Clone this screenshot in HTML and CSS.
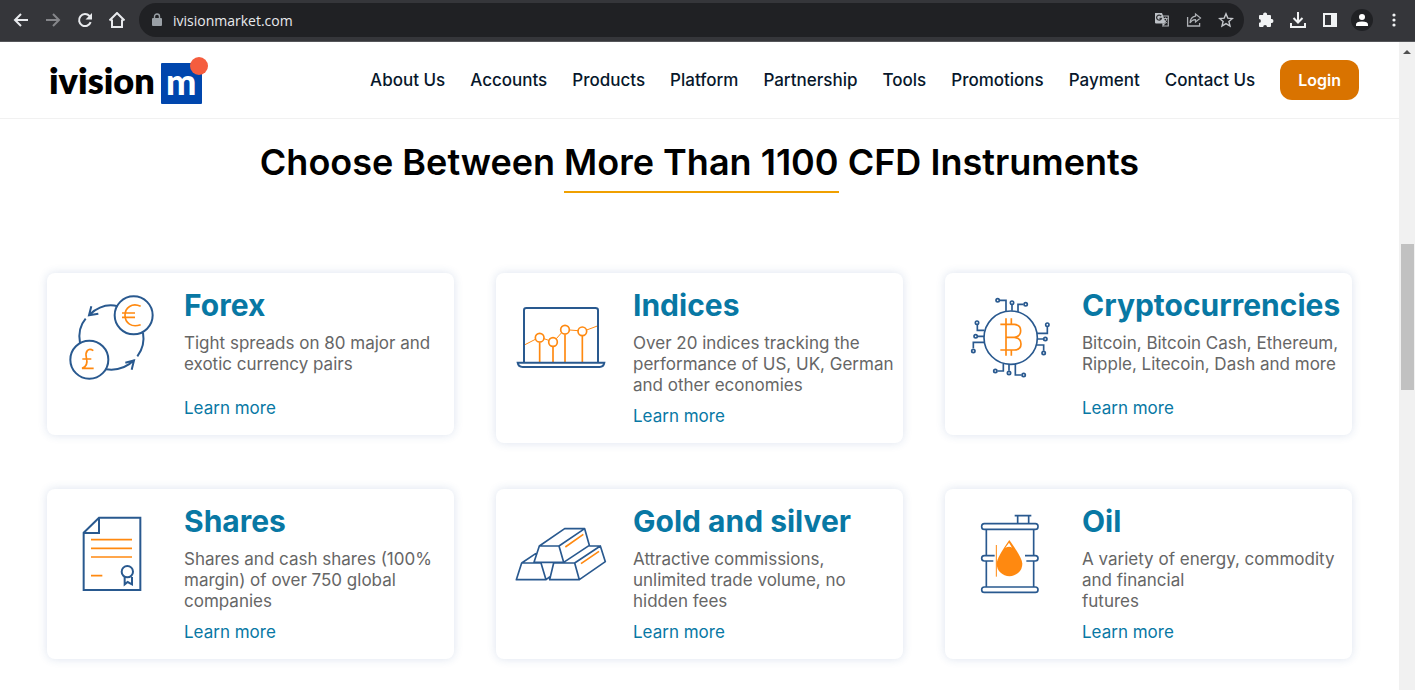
FILE: index.html
```html
<!DOCTYPE html>
<html lang="en">
<head>
<meta charset="utf-8">
<title>ivisionmarket</title>
<link rel="stylesheet" href="styles.css">
</head>
<body>
<div class="toolbar">
  <button class="tool" aria-label="Back"><svg width="16" height="16" viewBox="0 0 16 16"><path d="M15 8H2M8 2L2 8l6 6" fill="none" stroke="#e8eaed" stroke-width="2"/></svg></button>
  <button class="tool" aria-label="Forward"><svg width="16" height="16" viewBox="0 0 16 16"><path d="M1 8h13M8 2l6 6-6 6" fill="none" stroke="#85868a" stroke-width="2"/></svg></button>
  <button class="tool" aria-label="Reload"><svg width="16" height="16" viewBox="0 0 16 16"><path d="M13.7 10.200A6 6 0 1 1 12.500 4L14 5.500" fill="none" stroke="#e8eaed" stroke-width="2"/><path d="M15 1v6.500H8.500z" fill="#e8eaed"/></svg></button>
  <button class="tool" aria-label="Home"><svg width="16" height="16" viewBox="1 1 16 16"><path d="M1.500 9.500L9 2l7.500 7.500M4 8.500V16h10V8.500" fill="none" stroke="#e8eaed" stroke-width="2"/></svg></button>
  <div class="omnibox">
    <svg width="10" height="14" viewBox="0 0 10 14"><path d="M1 5h8q1 0 1 1v6q0 1-1 1H1q-1 0-1-1V6q0-1 1-1z" fill="#9aa0a6"/><path d="M2.500 6V3.500a2.500 2.500 0 0 1 5 0V6" fill="none" stroke="#9aa0a6" stroke-width="1.400"/></svg>
    <input class="address" type="text" value="ivisionmarket.com" aria-label="Address">
    <button class="tool" aria-label="Translate"><svg width="16" height="16" viewBox="0 0 16 16"><path d="M8 4h6.300v10H8" fill="none" stroke="#aeb1b5" stroke-width="1.200"/><path d="M1 1h7l4 10.500H2q-1 0-1-1z" fill="#bdc1c6"/><path d="M7.200 4.200A2.500 2.500 0 1 0 7.500 6.300H5.500" fill="none" stroke="#303134" stroke-width="1.300"/><path d="M9.500 6.500h4M11.500 5.500v1M13 6.500q-.7 3-3 4.500M10.500 8q1 2 2.500 3.200" fill="none" stroke="#aeb1b5"/><path d="M8 11.500h3.500L9 14z" fill="#bdc1c6"/></svg></button>
    <button class="tool" aria-label="Share"><svg width="16" height="16" viewBox="0 0 16 16"><path d="M1.600 5v9h12v-3" fill="none" stroke="#aeb1b5" stroke-width="1.300"/><path d="M9.500 2l5 4-5 4V7.700Q6 7.500 4 11q.4-6 5.500-6.800z" fill="none" stroke="#aeb1b5" stroke-width="1.200"/></svg></button>
    <button class="tool" aria-label="Bookmark"><svg width="16" height="16" viewBox="0 0 16 16"><path d="M8 1.800l1.800 4.300 4.600.4-3.500 3 1.100 4.600-4-2.500-4 2.500 1.100-4.600-3.500-3 4.600-.4z" fill="none" stroke="#c4c7cb" stroke-width="1.400"/></svg></button>
  </div>
  <div class="extras">
    <button class="tool" aria-label="Extensions"><svg width="16" height="16" viewBox="0 0 16 16"><path d="M1 4q0-1 1-1h3.200a2 2 0 1 1 3.800 0h3q1 0 1 1v3a2 2 0 1 1 0 3.900V14q0 1-1 1H9a1.800 1.800 0 1 0-3.800 0H2q-1 0-1-1v-3.200a1.900 1.900 0 1 0 0-3.800z" fill="#f1f3f4"/></svg></button>
    <button class="tool" aria-label="Downloads"><svg width="16" height="16" viewBox="0 0 16 16"><path d="M8 0v10M3.500 6L8 10.500 12.500 6M1 11v4h14v-4" fill="none" stroke="#f1f3f4" stroke-width="2"/></svg></button>
    <button class="tool" aria-label="Side panel"><svg width="16" height="16" viewBox="0 0 16 16"><path d="M1 1h14v14H1zM3 3v10h6V3z" fill="#f1f3f4" fill-rule="evenodd"/></svg></button>
    <button class="tool profile" aria-label="Profile"><svg width="22" height="22" viewBox="0 0 22 22"><circle cx="11" cy="11" r="11" fill="#202124"/><circle cx="11" cy="8" r="3" fill="#fff"/><path d="M5 17v-1.500Q5 12.500 11 12.500t6 3V17z" fill="#fff"/></svg></button>
    <button class="tool" aria-label="Menu"><svg width="16" height="16" viewBox="0 0 16 16"><g fill="#f1f3f4"><circle cx="8" cy="3" r="1.600"/><circle cx="8" cy="8" r="1.600"/><circle cx="8" cy="13" r="1.600"/></g></svg></button>
  </div>
</div>
<div class="viewport">
  <div class="page">
    <header class="header">
      <a class="logo" href="#"><span class="logo-word">ivision</span><span class="logo-mark">m</span></a>
      <nav class="nav">
        <a href="#">About Us</a><a href="#">Accounts</a><a href="#">Products</a><a href="#">Platform</a><a href="#">Partnership</a><a href="#">Tools</a><a href="#">Promotions</a><a href="#">Payment</a><a href="#">Contact Us</a>
        <button class="login">Login</button>
      </nav>
    </header>
    <main class="main">
      <h1 class="heading">Choose Between <span class="underlined">More Than 1100</span> CFD Instruments</h1>
      <div class="cards">
        <article class="card">
          <svg class="icon" viewBox="60 60 330 330"><g class="blue"><path d="M233 124Q190 112 148 149M154 124l-7 27 28-5M137 161Q112 190 120 234M309 203Q316 243 292 274M198 313Q247 320 282 286M256 293l26-7-7 28"/><circle cx="281" cy="151" r="57"/><circle cx="148" cy="284" r="57"/></g><g class="orange"><path d="M302 124C276 112 255 128 255 151s20 38 47 28M246 144h39M246 157h39"/><path d="M160 257C144 246 135 261 139 277C143 293 139 306 126 310h35M127 282h27"/></g></svg>
          <div class="body"><h2>Forex</h2><p>Tight spreads on 80 major and exotic currency pairs</p><a href="#">Learn more</a></div>
        </article>
        <article class="card">
          <svg class="icon" viewBox="57 60 330 330"><g class="orange thin"><path d="M105 239l31-16M162 221l14 5M199 221l15-17M239 195l25 2M290 195l32-12"/></g><g class="orange"><path d="M149 232v59M189 245v46M225 208v83M277 213v78"/><circle cx="149" cy="218" r="13"/><circle cx="189" cy="231" r="13"/><circle cx="225" cy="194" r="13"/><circle cx="277" cy="199" r="13"/></g><g class="blue"><path d="M102 292V136q0-7 7-7h207q8 0 8 7v156M83 293h260q-2 13-14 13H98q-13 0-15-13z"/></g></svg>
          <div class="body"><h2>Indices</h2><p>Over 20 indices tracking the performance of US, UK, German and other economies</p><a href="#">Learn more</a></div>
        </article>
        <article class="card">
          <svg class="icon" viewBox="54 60 330 330"><g class="blue fine"><circle cx="212" cy="218" r="80"/><path d="M198 139v-33h-19M216 137v-17M234 141v-23h16M133 196h-21v-16M132 214h-18M133 232h-33v18M290 205h32v-19M292 222h17M289 240h22v17M190 296v22h-17M207 298v19M226 297v33h18"/><circle cx="173" cy="106" r="5"/><circle cx="216" cy="113" r="5"/><circle cx="257" cy="118" r="5"/><circle cx="111" cy="173" r="5"/><circle cx="107" cy="214" r="5"/><circle cx="100" cy="258" r="5"/><circle cx="322" cy="179" r="5"/><circle cx="316" cy="222" r="5"/><circle cx="311" cy="264" r="5"/><circle cx="166" cy="318" r="5"/><circle cx="207" cy="324" r="5"/><circle cx="251" cy="330" r="5"/></g><g class="orange"><path d="M181 178h42q19 2 19 19t-19 20h-25M223 217q20 3 20 20t-20 18h-42M198 160v112M214 160v18M214 255v17"/></g></svg>
          <div class="body"><h2>Cryptocurrencies</h2><p>Bitcoin, Bitcoin Cash, Ethereum, Ripple, Litecoin, Dash and more</p><a href="#">Learn more</a></div>
        </article>
        <article class="card">
          <svg class="icon" viewBox="60 63 330 330"><g class="blue"><path d="M131 158l46-45h124v217H131zM177 113v46h-46"/><circle cx="262" cy="275" r="17"/><path d="M254 291v22l9-7 13 7v-22"/></g><g class="orange"><path d="M153 179h123M153 205h123M153 231h123M153 287h34"/></g></svg>
          <div class="body"><h2>Shares</h2><p>Shares and cash shares (100% margin) of over 750 global companies</p><a href="#">Learn more</a></div>
        </article>
        <article class="card">
          <svg class="icon" viewBox="57 63 330 330"><g class="blue medium"><path d="M148 198l76-52h60l14 50-77 51-14-49zM207 198l77-52M148 198h59l14 49h-89zM95 249h58l15 50H79zM95 249l43-29M191 249h63l14 50h-89zM254 249l77-51 15 47-78 54M298 198h33M168 299l12-9"/></g><g class="orange"><path d="M226 201l54-38M273 251l54-37"/></g></svg>
          <div class="body"><h2>Gold and silver</h2><p>Attractive commissions, unlimited trade volume, no hidden fees</p><a href="#">Learn more</a></div>
        </article>
        <article class="card">
          <svg class="icon" viewBox="54 63 330 330"><g class="blue medium"><rect x="125" y="131" width="169" height="17" rx="8"/><rect x="125" y="321" width="169" height="16" rx="8"/><path d="M224 107h50M233 107v24M266 107v24M139 148v79M139 244v77M281 148v79M281 244v77M164 227h-31q-8 0-8 8t8 8h27M255 227h31q8 0 8 8t-8 8h-27"/></g><path d="M169 195v95" class="orange thin"/><path d="M208 180Q170 234 170 251a38 37 0 0 0 77 0Q247 234 208 180z" fill="#ff8910"/><path d="M207 188l-11 15q13-5 20 0z" fill="#fff"/></svg>
          <div class="body"><h2>Oil</h2><p>A variety of energy, commodity and financial<br>futures</p><a href="#">Learn more</a></div>
        </article>
      </div>
    </main>
  </div>
  <div class="scrollbar"><svg width="16" height="20" viewBox="0 0 16 20"><path d="M4 12l4-4 4 4z" fill="#505050"/></svg><div class="thumb"></div></div>
</div>
</body>
</html>
```
FILE: styles.css
```css
* { box-sizing: border-box; }
body { margin: 0; min-height: 100vh; display: flex; flex-direction: column; background: #fff; font-family: Inter, "Liberation Sans", sans-serif; }
button { font: inherit; border: 0; padding: 0; background: none; }
a { text-decoration: none; }
svg { display: block; flex: none; }

.toolbar { display: flex; align-items: center; gap: 16px; padding: 3px 13px 4px; background: #35363a; border-bottom: 1px solid #55565a; }
.tool { display: flex; flex: none; }
.omnibox { flex: 1; display: flex; align-items: center; gap: 16px; height: 34px; margin: 0 -2px; padding: 0 10px 0 13px; border-radius: 17px; background: #202124; }
.address { flex: 1; min-width: 0; padding: 0; margin-left: -5px; border: 0; background: none; color: #e8eaed; font: 14px "Open Sans", sans-serif; }
.extras { display: flex; align-items: center; gap: 16px; }
.profile { margin: 0 -3px; }

.viewport { flex: 1; display: flex; }
.page { flex: 1; min-width: 0; }
.scrollbar { width: 16px; background: #f1f1f1; }
.thumb { height: 146px; margin: 182px 1px 0 2px; background: #c1c1c1; }

.header { display: flex; align-items: center; justify-content: space-between; padding: 14px 40px 14px 49px; border-bottom: 1px solid #f1f1f1; }
.logo { display: flex; align-items: center; gap: 6px; color: #000; font: 800 36px/48px Lato, sans-serif; }
.logo-mark { position: relative; width: 41px; height: 41px; margin-top: 6px; border-radius: 1px; background: #0046ad; color: #fff; font-weight: 900; line-height: 36px; text-align: center; }
.logo-mark::after { content: ""; position: absolute; top: -6px; right: -6px; width: 18px; height: 18px; border-radius: 50%; background: #f55d3e; }
.nav { display: flex; align-items: center; gap: 25px; font-size: 17px; font-weight: 500; white-space: nowrap; }
.nav a { color: #07172b; }
.login { padding: 0 18px; border-radius: 12px; background: #d97300; color: #fff; font-size: 16px; font-weight: 600; line-height: 40px; }

.main { padding: 20px 47px 32px; }
.heading { margin: 0 0 80px; color: #000; font-size: 36px; font-weight: 600; line-height: 46px; text-align: center; }
.underlined { display: inline-block; padding-bottom: 6px; border-bottom: 2px solid #f0a000; }
.cards { display: grid; grid-template-columns: repeat(3, 1fr); gap: 46px 42px; align-items: start; }
.card { display: flex; gap: 14px; padding: 12px 4px 16px 13px; border-radius: 8px; background: #fff; box-shadow: 0 0 10px rgba(40, 80, 150, 0.16); }
.icon { width: 110px; height: 110px; }
.icon .blue { fill: none; stroke: #29598f; stroke-width: 6; }
.icon .medium { stroke-width: 5; stroke-linejoin: round; }
.icon .fine { stroke-width: 5; }
.icon .orange { fill: none; stroke: #ff8910; stroke-width: 5; }
.icon .thin { stroke-width: 3; }
.body { flex: 1; min-width: 0; }
.body h2 { margin: 0 0 8px; color: #0878a4; font-size: 30px; font-weight: 700; line-height: 40px; }
.body p { min-height: 55px; margin: 0 0 10px; color: #666; font-size: 17px; line-height: 21px; }
.body a { display: block; color: #0878a4; font-size: 17px; line-height: 21px; }
```
